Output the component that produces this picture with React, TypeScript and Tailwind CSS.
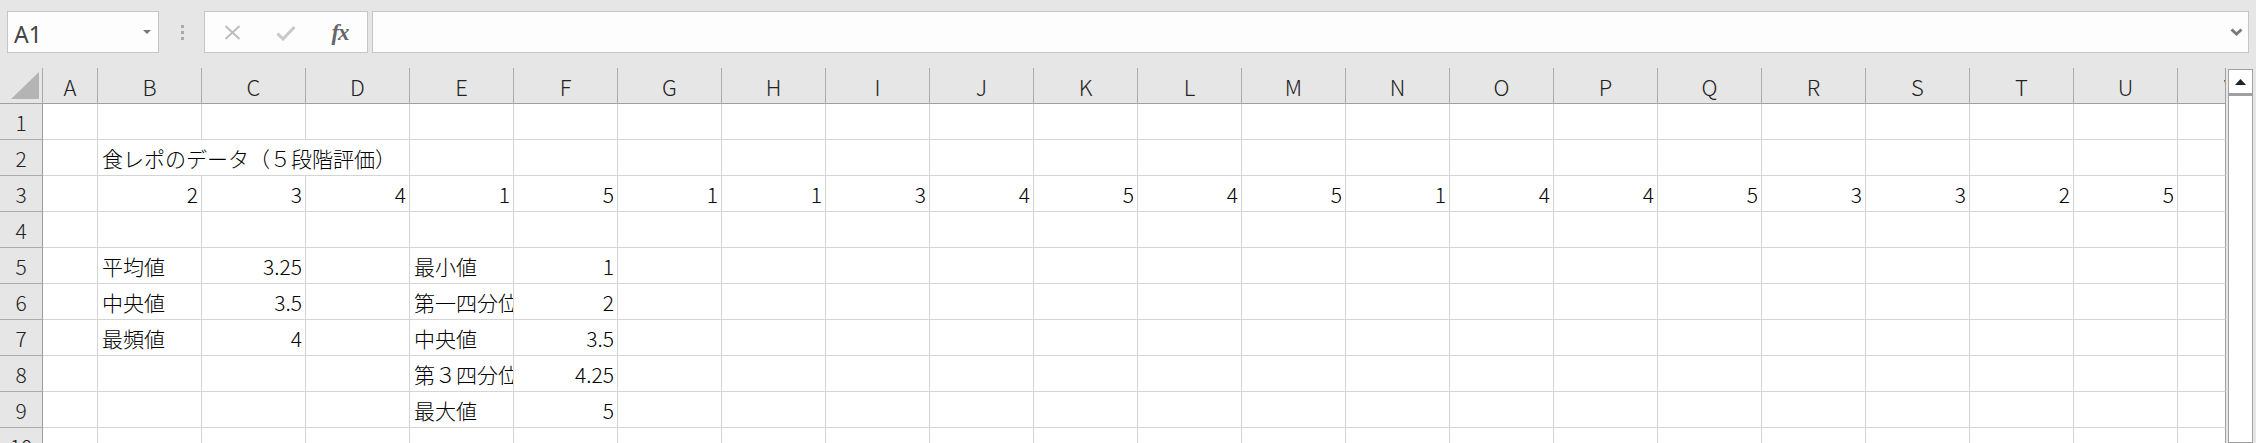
import clsx from "clsx";

const COLS = "ABCDEFGHIJKLMNOPQRSTU".split("");
const ROW3 = [2, 3, 4, 1, 5, 1, 1, 3, 4, 5, 4, 5, 1, 4, 4, 5, 3, 3, 2, 5];

type CellData = { text: string; num?: boolean; span?: boolean };

const cells: Record<string, CellData> = {
  "2B": { text: "食レポのデータ（５段階評価）", span: true },
  "5B": { text: "平均値" },
  "5C": { text: "3.25", num: true },
  "5E": { text: "最小値" },
  "5F": { text: "1", num: true },
  "6B": { text: "中央値" },
  "6C": { text: "3.5", num: true },
  "6E": { text: "第一四分位" },
  "6F": { text: "2", num: true },
  "7B": { text: "最頻値" },
  "7C": { text: "4", num: true },
  "7E": { text: "中央値" },
  "7F": { text: "3.5", num: true },
  "8E": { text: "第３四分位" },
  "8F": { text: "4.25", num: true },
  "9E": { text: "最大値" },
  "9F": { text: "5", num: true },
};
ROW3.forEach((v, i) => {
  cells[`3${COLS[i + 1]}`] = { text: String(v), num: true };
});

function Toolbar() {
  return (
    <div className="h-[68px] flex items-start pt-[11px] pl-[7px] pr-[7px]">
      {/* name box */}
      <div className="w-[152px] h-[42px] border border-[#c6c6c6] bg-[#fdfdfd] flex items-center justify-between pl-[6px] pr-[7px]">
        <span className="font-['Noto_Sans',sans-serif] text-[23px] leading-none text-[#444] pt-[4px]">A1</span>
        <svg width="8" height="4" viewBox="0 0 8 4">
          <polygon points="0,0 8,0 4,4" fill="#777" />
        </svg>
      </div>
      {/* grip */}
      <div className="w-[45px] h-[42px] flex flex-col items-center justify-center gap-[3px] pl-[1px]">
        <div className="w-[3px] h-[3px] bg-[#a8a8a8]" />
        <div className="w-[3px] h-[3px] bg-[#a8a8a8]" />
        <div className="w-[3px] h-[3px] bg-[#a8a8a8]" />
      </div>
      {/* cancel / enter / fx */}
      <div className="w-[164px] h-[42px] border border-[#c6c6c6] bg-[#fdfdfd] flex items-center">
        <div className="w-[54px] flex justify-center">
          <svg width="17" height="15" viewBox="0 0 17 15">
            <path d="M1.5 1 L15.5 14 M15.5 1 L1.5 14" stroke="#bdbdbd" strokeWidth="2" />
          </svg>
        </div>
        <div className="w-[54px] flex justify-center pt-[2px]">
          <svg width="20" height="16" viewBox="0 0 20 16">
            <polyline points="1.5,8.5 7,14 18.5,2" fill="none" stroke="#c8c8c8" strokeWidth="3" />
          </svg>
        </div>
        <div className="w-[54px] flex justify-center">
          <span className="font-['Liberation_Serif',serif] italic font-semibold text-[23px] leading-none text-[#666] tracking-[-1px]">
            fx
          </span>
        </div>
      </div>
      <div className="w-[4px]" />
      {/* formula input */}
      <div className="flex-1 h-[42px] border border-[#c6c6c6] bg-[#fdfdfd] flex items-center justify-end pr-[5px]">
        <svg width="13" height="8" viewBox="0 0 13 8">
          <polyline points="1.5,1.5 6.5,6 11.5,1.5" fill="none" stroke="#7a7a7a" strokeWidth="3" />
        </svg>
      </div>
    </div>
  );
}

function Cell({ data }: { data?: CellData }) {
  return (
    <div
      className={clsx(
        "border-r border-b border-[#d4d4d4] bg-white flex items-center whitespace-nowrap text-[21px] leading-[30px] font-light text-black",
        data?.span ? "col-span-3 overflow-visible" : "overflow-hidden",
        data?.num ? "justify-end pr-[3px]" : "pl-[4px]"
      )}
    >
      {data?.text}
    </div>
  );
}

function Sheet() {
  const rows = Array.from({ length: 10 }, (_, i) => i + 1);
  return (
    <div className="w-[2226px] grid grid-cols-[43px_55px_repeat(20,104px)_48px] auto-rows-[36px] font-['Noto_Sans_CJK_JP','Noto_Sans',sans-serif]">
      {/* select-all corner */}
      <div className="border-r border-b border-[#ababab] border-b-[#a0a0a0] bg-[#e6e6e6] flex items-end justify-end pr-[3px] pb-[4px]">
        <svg width="28" height="27" viewBox="0 0 28 27">
          <polygon points="0,27 28,27 28,0" fill="#b4b4b4" />
        </svg>
      </div>
      {COLS.map((c) => (
        <div
          key={c}
          className="border-r border-b border-[#ababab] border-b-[#a0a0a0] bg-[#e6e6e6] flex items-center justify-center text-[22px] leading-[30px] font-light text-[#222]"
        >
          {c}
        </div>
      ))}
      <div className="border-b border-r border-[#a0a0a0] bg-[#e6e6e6] overflow-hidden">
        <div className="w-[104px] h-full flex items-center justify-center text-[22px] leading-[30px] font-light text-[#222]">V</div>
      </div>

      {rows.map((r) => {
        const out = [];
        out.push(
          <div
            key={`h${r}`}
            className="border-r border-b border-[#ababab] border-r-[#9c9c9c] bg-[#e6e6e6] flex items-center justify-center text-[21px] leading-[30px] font-light text-[#222]"
          >
            {r}
          </div>
        );
        let i = 0;
        while (i < COLS.length) {
          const d = cells[`${r}${COLS[i]}`];
          out.push(<Cell key={`${r}${COLS[i]}`} data={d} />);
          i += d?.span ? 3 : 1;
        }
        out.push(<div key={`v${r}`} className="border-r border-b border-[#d4d4d4] border-r-[#a0a0a0] bg-white" />);
        return out;
      })}
    </div>
  );
}

function ScrollBar() {
  return (
    <div className="w-[30px] pl-[2px] pt-[1px] flex flex-col">
      <div className="w-[25px] h-[25px] border border-[#a0a0a0] bg-white flex items-center justify-center">
        <svg width="11" height="6" viewBox="0 0 11 6">
          <polygon points="0,6 11,6 5.5,0" fill="#222" />
        </svg>
      </div>
      <div className="w-[25px] flex-1 border border-[#a0a0a0] border-t-2 bg-white" />
    </div>
  );
}

export default function App() {
  return (
    <div className="w-[2256px] h-[443px] overflow-hidden bg-[#e6e6e6]">
      <Toolbar />
      <div className="flex h-[375px]">
        <Sheet />
        <ScrollBar />
      </div>
    </div>
  );
}
